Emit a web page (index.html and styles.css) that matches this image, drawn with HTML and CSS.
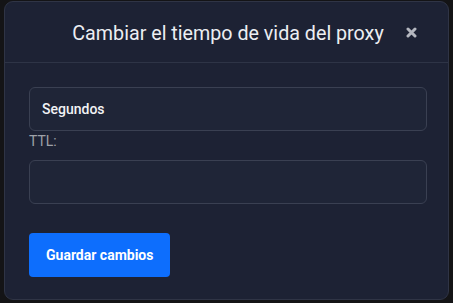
FILE: index.html
```html
<html>
<head>
    <title>
        Cambiar TTL
    </title>
    <link rel="stylesheet" href="styles.css">
</head>

<body>
<div class="modal">
    <div class="modal-header">
        <span></span>
        <h2 class="modal-title">Cambiar el tiempo de vida del proxy</h2>
        <button class="close-btn" type="button">
            <svg width="11" height="11" viewBox="0 0 11 11">
                <path d="M2 2 L9 9 M9 2 L2 9" stroke="#b4b7bf" stroke-width="3" stroke-linecap="round"/>
            </svg>
        </button>
    </div>

    <div class="modal-body">
        <select class="field field-select">
            <option>Segundos</option>
        </select>
        <label class="field-label" for="ttl">TTL:</label>
        <input class="field" type="text" id="ttl">

        <button class="save-btn" type="button">Guardar cambios</button>
    </div>
</div>
</body>
</html>
```

FILE: styles.css
```css
body {
    margin: 0;
    background-color: #141416;
    font-family: Roboto, "Liberation Sans", sans-serif;
}

.modal {
    margin: 1px 4px 0 4px;
    height: 299px;
    box-sizing: border-box;
    background-color: #1d2234;
    border: 1px solid #2f3445;
    border-radius: 9px;
}

.modal-header {
    display: grid;
    grid-template-columns: 1fr auto 1fr;
    align-items: center;
    height: 60px;
    border-bottom: 1px solid #2e3446;
}

.modal-title {
    margin: 0 0 0 3px;
    padding-top: 2px;
    font-size: 19.7px;
    font-weight: 400;
    color: #eceef2;
}

.close-btn {
    justify-self: end;
    margin-right: 31px;
    padding: 0;
    background: none;
    border: none;
    display: flex;
}

.modal-body {
    display: flex;
    flex-direction: column;
    align-items: flex-start;
    padding: 24px 21px 0 24px;
}

.field {
    width: 100%;
    height: 44px;
    box-sizing: border-box;
    background-color: #1f2537;
    border: 1px solid #3a4052;
    border-radius: 6px;
    padding: 0 12px;
    color: #f2f3f5;
    font-family: Roboto, "Liberation Sans", sans-serif;
    font-size: 14px;
    font-weight: 500;
    outline: none;
}

.field-select {
    appearance: none;
    -webkit-appearance: none;
}

.field-label {
    font-size: 14px;
    line-height: 21px;
    color: #9ea1a8;
    margin-bottom: 8px;
}

.save-btn {
    margin-top: 29px;
    height: 44px;
    padding: 0 17px;
    background-color: #0d6efd;
    border: none;
    border-radius: 4px;
    color: #ffffff;
    font-family: Roboto, "Liberation Sans", sans-serif;
    font-size: 14px;
    font-weight: 700;
}
```
